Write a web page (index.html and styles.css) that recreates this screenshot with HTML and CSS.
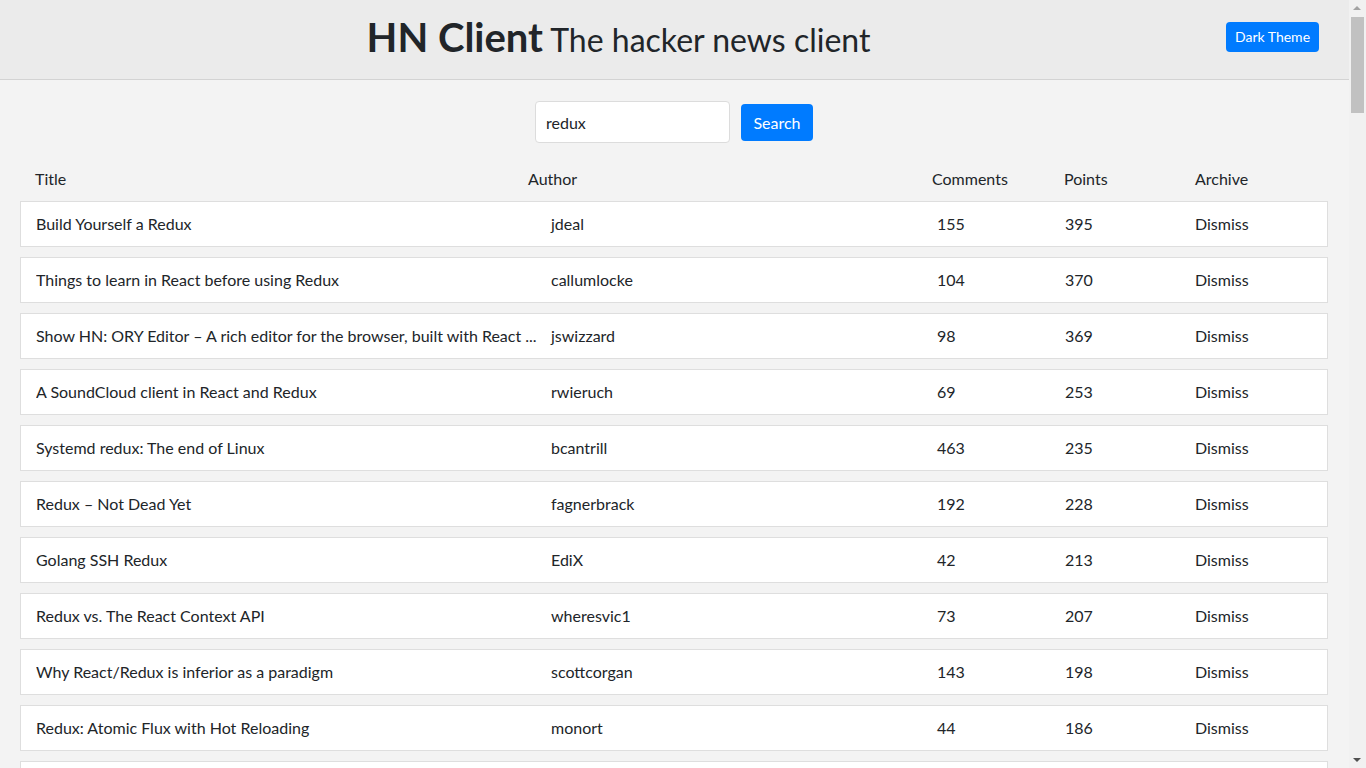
FILE: index.html
```html
<!DOCTYPE html>
<html lang="en">
<head>
<meta charset="utf-8">
<title>HN Client</title>
<link rel="stylesheet" href="styles.css">
</head>
<body>
<div class="page">
<header class="topbar">
  <h1 class="brand"><span class="brand-name">HN Client</span> <span class="brand-sub">The hacker news client</span></h1>
  <button class="btn btn-theme" type="button">Dark Theme</button>
</header>
<main class="content">
  <form class="search">
    <input class="search-input" type="text" value="redux">
    <button class="btn btn-search" type="button">Search</button>
  </form>
  <div class="table">
    <div class="thead">
      <span class="h-title">Title</span>
      <span class="h-author">Author</span>
      <span class="h-comments">Comments</span>
      <span class="h-points">Points</span>
      <span class="h-archive">Archive</span>
    </div>
    <div class="row"><span class="c-title">Build Yourself a Redux</span><span class="c-author">jdeal</span><span class="c-comments">155</span><span class="c-points">395</span><span class="c-archive">Dismiss</span></div>
    <div class="row"><span class="c-title">Things to learn in React before using Redux</span><span class="c-author">callumlocke</span><span class="c-comments">104</span><span class="c-points">370</span><span class="c-archive">Dismiss</span></div>
    <div class="row"><span class="c-title">Show HN: ORY Editor – A rich editor for the browser, built with React ...</span><span class="c-author">jswizzard</span><span class="c-comments">98</span><span class="c-points">369</span><span class="c-archive">Dismiss</span></div>
    <div class="row"><span class="c-title">A SoundCloud client in React and Redux</span><span class="c-author">rwieruch</span><span class="c-comments">69</span><span class="c-points">253</span><span class="c-archive">Dismiss</span></div>
    <div class="row"><span class="c-title">Systemd redux: The end of Linux</span><span class="c-author">bcantrill</span><span class="c-comments">463</span><span class="c-points">235</span><span class="c-archive">Dismiss</span></div>
    <div class="row"><span class="c-title">Redux – Not Dead Yet</span><span class="c-author">fagnerbrack</span><span class="c-comments">192</span><span class="c-points">228</span><span class="c-archive">Dismiss</span></div>
    <div class="row"><span class="c-title">Golang SSH Redux</span><span class="c-author">EdiX</span><span class="c-comments">42</span><span class="c-points">213</span><span class="c-archive">Dismiss</span></div>
    <div class="row"><span class="c-title">Redux vs. The React Context API</span><span class="c-author">wheresvic1</span><span class="c-comments">73</span><span class="c-points">207</span><span class="c-archive">Dismiss</span></div>
    <div class="row"><span class="c-title">Why React/Redux is inferior as a paradigm</span><span class="c-author">scottcorgan</span><span class="c-comments">143</span><span class="c-points">198</span><span class="c-archive">Dismiss</span></div>
    <div class="row"><span class="c-title">Redux: Atomic Flux with Hot Reloading</span><span class="c-author">monort</span><span class="c-comments">44</span><span class="c-points">186</span><span class="c-archive">Dismiss</span></div>
    <div class="row row-empty"></div>
  </div>
</main>
</div>
<div class="scrollbar" aria-hidden="true">
  <span class="sb-arrow sb-up"></span>
  <span class="sb-thumb"></span>
  <span class="sb-arrow sb-down"></span>
</div>
</body>
</html>
```
FILE: styles.css
```css
html, body {
  margin: 0;
  padding: 0;
}
body {
  background: #f3f3f3;
  color: #212529;
  font-family: "Lato", "Open Sans", "Noto Sans", sans-serif;
  font-size: 16px;
  line-height: 24px;
  height: 768px;
  overflow: hidden;
}
.page {
  margin-right: 17px;
}
.topbar {
  display: flex;
  align-items: center;
  height: 80px;
  box-sizing: border-box;
  background: #ebebeb;
  border-bottom: 1px solid #d3d3d3;
  padding: 0 30px;
  gap: 19px;
}
.brand {
  flex: 1;
  margin: -6px 0 0 0;
  text-align: center;
  font-weight: normal;
  color: #212529;
  line-height: 1;
}
.brand-name {
  font-size: 40px;
  font-weight: 700;
}
.brand-sub {
  font-size: 32px;
}
.btn {
  border: none;
  border-radius: 4px;
  background: #007bff;
  color: #fff;
  font-family: inherit;
  cursor: pointer;
}
.btn-theme {
  font-size: 14px;
  height: 30px;
  width: 93px;
  padding: 0;
  margin-top: -6px;
}
.content {
  padding: 21px 21px 0 20px;
}
.search {
  display: flex;
  justify-content: center;
  align-items: center;
  gap: 11px;
}
.search-input {
  width: 195px;
  height: 42px;
  box-sizing: border-box;
  border: 1px solid #dcdcdc;
  border-radius: 4px;
  background: #fff;
  font-family: inherit;
  font-size: 16px;
  color: #212529;
  padding: 0 10px;
}
.btn-search {
  width: 72px;
  height: 37px;
  font-size: 16px;
  padding: 0;
}
.table {
  margin-top: 12px;
}
.thead {
  display: grid;
  grid-template-columns: 493px 404px 132px 131px 1fr;
  padding: 12px 0 10px 15px;
}
.row {
  display: grid;
  grid-template-columns: 515px 386px 128px 130px 1fr;
  align-items: center;
  height: 46px;
  box-sizing: border-box;
  padding-left: 15px;
  margin-bottom: 10px;
  background: #fff;
  border: 1px solid #dedede;
}
.c-title {
  overflow: hidden;
  white-space: nowrap;
  text-overflow: ellipsis;
  padding-right: 4px;
}
.scrollbar {
  position: fixed;
  top: 0;
  right: 0;
  width: 17px;
  height: 100vh;
  background: #f1f1f1;
}
.sb-thumb {
  position: absolute;
  left: 2px;
  top: 17px;
  width: 13px;
  height: 96px;
  background: #c1c1c1;
}
.sb-arrow {
  position: absolute;
  left: 4px;
  width: 0;
  height: 0;
  border-left: 4px solid transparent;
  border-right: 4px solid transparent;
}
.sb-up {
  top: 6px;
  border-bottom: 4px solid #a3a3a3;
}
.sb-down {
  bottom: 6px;
  border-top: 4px solid #505050;
}
```
